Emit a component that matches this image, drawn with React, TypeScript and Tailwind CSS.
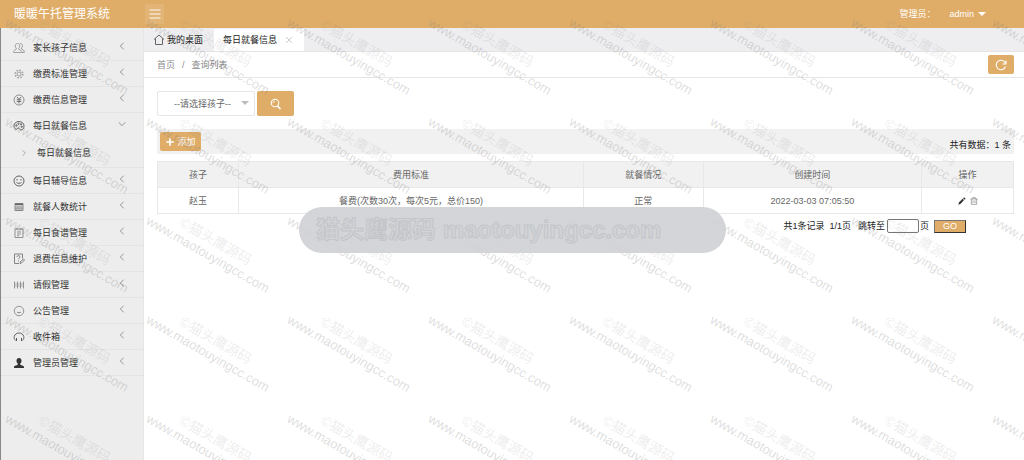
import { useState, type ReactNode } from 'react';

interface MenuItem {
  label: string;
  icon: ReactNode;
  children?: string[];
}

interface MealRecord {
  child: string;
  standard: string;
  status: string;
  createdAt: string;
}

function Icon({ children, className = 'size-3' }: { children: ReactNode; className?: string }) {
  return (
    <svg
      viewBox="0 0 24 24"
      fill="none"
      stroke="currentColor"
      strokeWidth="1.8"
      className={`shrink-0 ${className}`}
      aria-hidden="true"
    >
      {children}
    </svg>
  );
}

const MENU: MenuItem[] = [
  {
    label: '家长孩子信息',
    icon: (
      <Icon className="size-3 text-[#999]">
        <path d="M9 3c3 0 4.500 2.200 4.500 5 0 2-.8 3.500-2 4.500v2L16 17c1 .6 1.500 1.500 1.500 4H1c0-2.500.3-3.400 1.500-4l4-2.500v-2c-1.200-1-2-2.500-2-4.500 0-2.800 1.500-5 4.500-5z" />
        <path d="M14 3c3.500 0 5 2.200 5 4.500 0 2-.8 3.300-2 4.300V14l4 2c1.200.8 1.500 2.600 1.500 5H18" />
      </Icon>
    ),
  },
  {
    label: '缴费标准管理',
    icon: (
      <Icon className="size-3 text-[#999]">
        <circle cx="12" cy="12" r="4" />
        <circle cx="12" cy="12" r="7.500" strokeWidth="3" strokeDasharray="3 2.890" />
      </Icon>
    ),
  },
  {
    label: '缴费信息管理',
    icon: (
      <Icon className="size-3 text-[#666]">
        <circle cx="12" cy="12" r="10" strokeWidth="1.400" />
        <path d="M8 6l4 5 4-5M12 11v8M7.500 11.500h9M7.500 15h9" />
      </Icon>
    ),
  },
  {
    label: '每日就餐信息',
    icon: (
      <Icon className="size-3 text-[#555]">
        <path d="M12 3C6 3 2 7 2 12s3 7 4.500 7c2 0 1.500-3 4-3s2.500 4 6 4c3 0 5.500-4 5.500-8 0-5-4-9-10-9z" />
        <circle cx="7" cy="11" r="1.300" />
        <circle cx="11" cy="7.500" r="1.300" />
        <circle cx="16" cy="8.500" r="1.300" />
        <circle cx="17.500" cy="13.500" r="1.300" />
      </Icon>
    ),
    children: ['每日就餐信息'],
  },
  {
    label: '每日辅导信息',
    icon: (
      <Icon className="size-3 text-[#555]">
        <circle cx="12" cy="12" r="10" />
        <path d="M8 8v3M16 8v3M7 15c2 2 8 2 10 0" />
      </Icon>
    ),
  },
  {
    label: '就餐人数统计',
    icon: (
      <Icon className="size-3 text-[#666]">
        <path d="M4 5h16v14H4z" strokeWidth="1.500" />
        <path d="M4 6.500h16" strokeWidth="3" />
        <path d="M4 12h16M4 15.500h16M8 8v11M12 8v11M16 8v11" strokeWidth="1" />
      </Icon>
    ),
  },
  {
    label: '每日食谱管理',
    icon: (
      <Icon className="size-3 text-[#888]">
        <path d="M4 4h16v17H4zM8 2v4M16 2v4M8 10h8M8 14h8M8 17.500h4" />
      </Icon>
    ),
  },
  {
    label: '退费信息维护',
    icon: (
      <Icon className="size-3 text-[#777]">
        <path d="M19 11V2H3v19h9" />
        <path d="M8 8c0-4 6.500-3.500 6 0-.3 2-3 2-3 4.500M11 15v2" />
        <path d="M14 21l1-4 6-5 2 2-6 6z" />
      </Icon>
    ),
  },
  {
    label: '请假管理',
    icon: (
      <Icon className="size-3 text-[#777]">
        <path d="M3 5v14M9 5v14M15 5v14M21 5v14" strokeWidth="1.500" />
        <path d="M6 8v8M12 8v8M18 8v8" strokeWidth="1" />
      </Icon>
    ),
  },
  {
    label: '公告管理',
    icon: (
      <Icon className="size-3 text-[#777]">
        <circle cx="12" cy="12" r="9.500" strokeWidth="1.500" />
        <path d="M8 14c2 2 6 2 8 0" />
      </Icon>
    ),
  },
  {
    label: '收件箱',
    icon: (
      <Icon className="size-3 text-[#555]">
        <path d="M5 19C2 16 2 13 2.500 11c1-4.500 5-7 9.500-7s8.500 2.500 9.500 7c.5 2 .5 5-2.500 8" />
        <path d="M7 14v6M17 14v6" strokeWidth="2" />
      </Icon>
    ),
  },
  {
    label: '管理员管理',
    icon: (
      <Icon className="size-3 text-[#333]">
        <path
          fill="currentColor"
          stroke="none"
          d="M12 2c3.300 0 5 2.300 5 5.500 0 2.500-1 4.500-2.500 5.500v2c0 1.200 7.500 2 7.500 5v2H2v-2c0-3 7.500-3.800 7.500-5v-2C8 12 7 10 7 7.500 7 4.300 8.700 2 12 2z"
        />
      </Icon>
    ),
  },
];

const COLUMNS = [
  { label: '孩子', className: 'w-[81px]' },
  { label: '费用标准', className: '' },
  { label: '就餐情况', className: 'w-[14%]' },
  { label: '创建时间', className: 'w-[25.5%]' },
  { label: '操作', className: 'w-[92px]' },
];

const RECORDS: MealRecord[] = [
  {
    child: '赵玉',
    standard: '餐费(次数30次，每次5元，总价150)',
    status: '正常',
    createdAt: '2022-03-03 07:05:50',
  },
];

function Header() {
  return (
    <header className="flex h-7 items-center bg-[#dfad68] text-white">
      <h1 className="w-[145px] pl-3.5 text-[12px]">暖暖午托管理系统</h1>
      <button type="button" aria-label="菜单" className="flex h-5 w-[19px] items-center justify-center bg-white/10">
        <Icon className="size-3">
          <path d="M1 4h22M1 12h22M1 20h22" />
        </Icon>
      </button>
      <div className="ml-auto flex items-center pr-[38px]">
        <span className="mr-3.5">管理员：</span>
        <button type="button" className="flex items-center gap-1">
          admin
          <svg viewBox="0 0 8 4" className="h-1 w-2 fill-current" aria-hidden="true">
            <path d="M0 0h8L4 4z" />
          </svg>
        </button>
      </div>
    </header>
  );
}

function Sidebar() {
  const [open, setOpen] = useState('每日就餐信息');

  return (
    <nav className="w-36 shrink-0 border-r border-l border-r-[#e6e6e6] border-l-[#888] bg-[#ededed] pt-[7px] text-[#333]">
      {MENU.map((item) => {
        const expanded = open === item.label && !!item.children;
        return (
          <div key={item.label} className="border-b border-[#e4e4e4]">
            <button
              type="button"
              onClick={() => setOpen(expanded ? '' : item.label)}
              className="flex h-[25px] w-full items-center pr-4 pl-3"
            >
              {item.icon}
              <span className="ml-2">{item.label}</span>
              <span className="ml-auto pb-1 text-[#777]">
                <Icon className={`size-2.5 ${expanded ? '-rotate-90' : ''}`}>
                  <path d="M16 4l-8 8 8 8" />
                </Icon>
              </span>
            </button>
            {expanded &&
              item.children?.map((child) => (
                <a key={child} href="#" className="flex h-[29px] items-center pl-[19px]">
                  <Icon className="size-2 text-[#777]">
                    <path d="M8 4l8 8-8 8" />
                  </Icon>
                  <span className="ml-[9px]">{child}</span>
                </a>
              ))}
          </div>
        );
      })}
    </nav>
  );
}

function TabBar() {
  return (
    <div className="flex h-6 items-end border-b border-[#e4e4e4] bg-[#eeeef0] text-[#222]">
      <a href="#" className="flex h-full items-center gap-0.5 pr-[11px] pl-[9px]">
        <Icon className="size-3 text-[#555]">
          <path d="M2 11L12 2l10 9M5 9v12h14V9" />
        </Icon>
        我的桌面
      </a>
      <div className="flex h-[22px] items-center bg-white pr-2.5 pl-[9px]">
        <span>每日就餐信息</span>
        <button type="button" aria-label="关闭" className="ml-[7px] text-[#bbb]">
          <Icon className="size-2.5">
            <path d="M5 5l14 14M19 5L5 19" />
          </Icon>
        </button>
      </div>
    </div>
  );
}

function SearchForm() {
  return (
    <form className="flex gap-0.5" onSubmit={(e) => e.preventDefault()}>
      <div className="relative">
        <select
          aria-label="请选择孩子"
          className="h-[25px] w-[98px] appearance-none rounded-xs border border-[#e6e6e6] bg-white pl-4 text-[#666]"
        >
          <option>--请选择孩子--</option>
          <option>赵玉</option>
        </select>
        <svg viewBox="0 0 8 4" className="pointer-events-none absolute top-2.5 right-1.5 h-1 w-2 fill-[#bbb]" aria-hidden="true">
          <path d="M0 0h8L4 4z" />
        </svg>
      </div>
      <button
        type="submit"
        aria-label="查询"
        className="flex h-[25px] w-[37px] items-center justify-center rounded-xs bg-[#dfad68] text-white"
      >
        <Icon className="size-3">
          <circle cx="10" cy="10" r="7.500" strokeWidth="2.200" />
          <path d="M10 6c-2.500 0-4 1.500-4 4" />
          <path d="M15 16l6 6" strokeWidth="3.500" />
        </Icon>
      </button>
    </form>
  );
}

function RecordTable() {
  return (
    <table className="mt-[7px] w-full table-fixed border-collapse text-center text-[#666]">
      <thead className="bg-[#f1f1f1]">
        <tr>
          {COLUMNS.map((col) => (
            <th key={col.label} className={`h-[26px] border border-[#e8e8e8] font-normal ${col.className}`}>
              {col.label}
            </th>
          ))}
        </tr>
      </thead>
      <tbody>
        {RECORDS.map((row) => (
          <tr key={row.createdAt}>
            <td className="h-[26px] border border-[#e8e8e8]">{row.child}</td>
            <td className="border border-[#e8e8e8]">{row.standard}</td>
            <td className="border border-[#e8e8e8]">{row.status}</td>
            <td className="border border-[#e8e8e8]">{row.createdAt}</td>
            <td className="border border-[#e8e8e8]">
              <div className="flex justify-center gap-1">
                <button type="button" aria-label="编辑" className="text-[#333]">
                  <Icon className="size-2">
                    <path fill="currentColor" stroke="none" d="M1 23l2-7L14 5l4 4L8 20zM15.500 3.500L18 1l5 4-3 3z" />
                  </Icon>
                </button>
                <button type="button" aria-label="删除" className="text-[#888]">
                  <Icon className="size-2">
                    <path d="M1 6h22M8 6V2h8v4M4 6v16h16V6M9 10v8M15 10v8" strokeWidth="2.200" />
                  </Icon>
                </button>
              </div>
            </td>
          </tr>
        ))}
      </tbody>
    </table>
  );
}

function Pagination() {
  return (
    <div className="mt-[5px] flex items-center justify-end pr-12 text-[#222]">
      <span>共1条记录</span>
      <span className="ml-[5px]">1/1页</span>
      <label htmlFor="page" className="ml-[7px]">
        跳转至
      </label>
      <input id="page" type="text" className="mr-px ml-0.5 h-3.5 w-8 rounded-xs border border-[#767676] bg-white" />
      <span>页</span>
      <button
        type="button"
        className="ml-[5px] flex h-[13px] w-8 items-center justify-center border border-t-[#777] border-r-[#333] border-b-[#333] border-l-[#777] bg-[#dfad68] text-white"
      >
        GO
      </button>
    </div>
  );
}

function Watermark() {
  return (
    <div className="pointer-events-none absolute inset-0 overflow-hidden" aria-hidden="true">
      <div className="grid auto-rows-[99px] grid-cols-[repeat(8,141px)]">
        {Array.from({ length: 40 }, (_, i) => (
          <div key={i} className="flex items-center justify-center">
            <div className="rotate-[30deg] text-center leading-4 whitespace-nowrap">
              <p className="text-[14px] text-[#777]/15">©猫头鹰源码</p>
              <p className="text-[13px] text-[#777]/25">www.maotouyingcc.com</p>
            </div>
          </div>
        ))}
      </div>
    </div>
  );
}

export default function App() {
  return (
    <div className="relative flex min-h-screen flex-col bg-white font-['Liberation_Sans','Noto_Sans_CJK_SC',sans-serif] text-[9px] leading-3">
      <Header />
      <div className="flex flex-1">
        <Sidebar />
        <main className="min-w-0 flex-1">
          <TabBar />
          <div className="flex h-[26px] items-center border-b border-[#e6e6e6] pr-2.5 pl-[13px] text-[#888]">
            <a href="#">首页</a>
            <span className="mx-[7px]">/</span>
            <span>查询列表</span>
            <button
              type="button"
              aria-label="刷新"
              className="ml-auto flex h-[19px] w-[26px] items-center justify-center rounded-xs bg-[#dfad68] text-white"
            >
              <Icon className="size-3">
                <path d="M21 9a9.500 9.500 0 1 0 0 6" strokeWidth="2.200" />
                <path d="M22 3v7h-7" strokeWidth="2.200" />
              </Icon>
            </button>
          </div>
          <div className="pt-[13px] pr-2.5 pl-[13px]">
            <SearchForm />
            <div className="mt-[13px] flex h-[25px] items-center justify-between bg-[#f1f1f1] px-[3px]">
              <button
                type="button"
                className="flex h-[19px] w-[41px] items-center justify-center gap-0.5 rounded-xs bg-[#dfad68] text-white"
              >
                <Icon className="size-2.5">
                  <path d="M12 3v18M3 12h18" strokeWidth="4" />
                </Icon>
                添加
              </button>
              <span className="pt-1.5 text-[#222]">共有数据：1 条</span>
            </div>
            <RecordTable />
            <Pagination />
          </div>
        </main>
      </div>
      <Watermark />
      <div className="pointer-events-none absolute top-[207px] left-[299px] flex h-[46px] w-[427px] items-center rounded-full bg-[#cfd0d4]/90 pl-[17px]">
        <span className="text-[24px] font-bold whitespace-nowrap text-[#d1d3d7] [-webkit-text-stroke:1px_#c3c5c9]">
          猫头鹰源码 maotouyingcc.com
        </span>
      </div>
    </div>
  );
}
